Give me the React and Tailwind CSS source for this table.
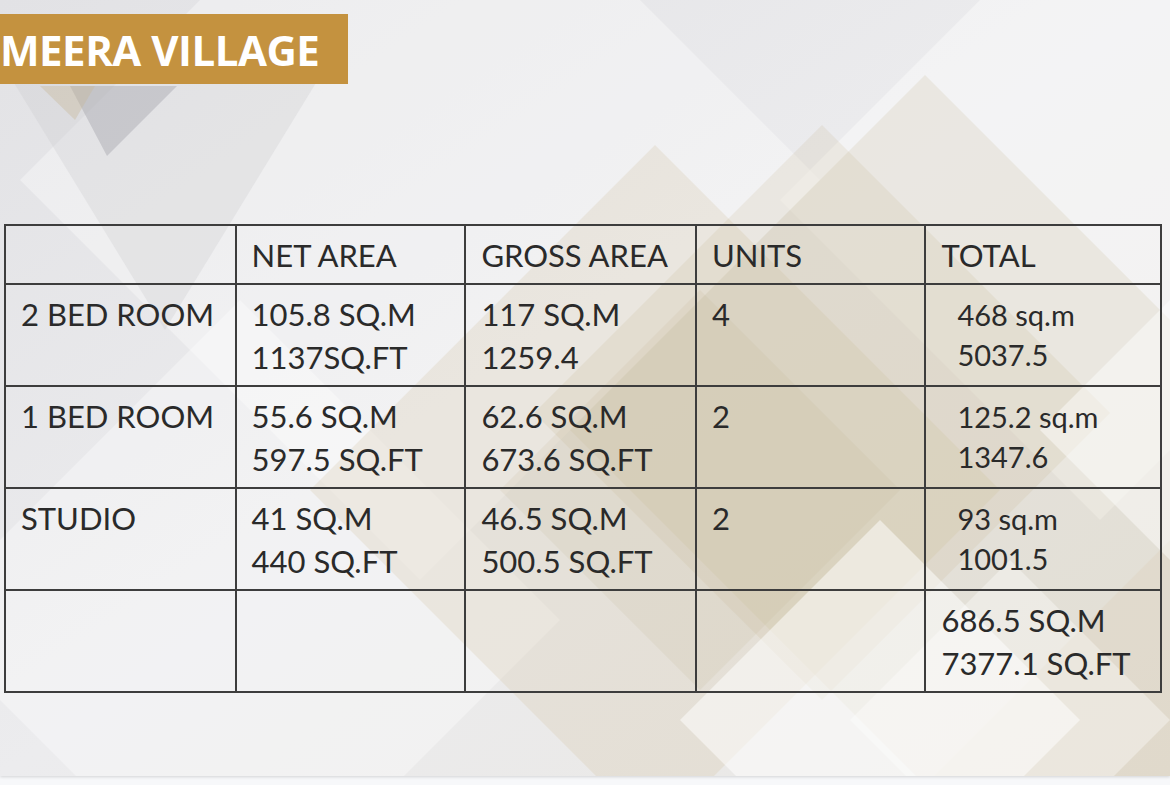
import React from "react";

const rows = [
    { type: "2 BED ROOM", net: ["105.8 SQ.M", "1137SQ.FT"], gross: ["117 SQ.M", "1259.4"], units: "4", total: ["468 sq.m", "5037.5"], indent: true },
    { type: "1 BED ROOM", net: ["55.6 SQ.M", "597.5 SQ.FT"], gross: ["62.6 SQ.M", "673.6 SQ.FT"], units: "2", total: ["125.2 sq.m", "1347.6"], indent: true },
    { type: "STUDIO", net: ["41 SQ.M", "440 SQ.FT"], gross: ["46.5 SQ.M", "500.5 SQ.FT"], units: "2", total: ["93 sq.m", "1001.5"], indent: true },
    { type: "", net: [], gross: [], units: "", total: ["686.5 SQ.M", "7377.1 SQ.FT"], indent: false },
];

function Backdrop() {
    return (
        <svg className="absolute inset-0" width="1170" height="776" viewBox="0 0 1170 776">
            <defs>
                <linearGradient id="base" x1="0" y1="0" x2="1" y2="1">
                    <stop offset="0" stopColor="#e2e2e5" />
                    <stop offset="0.5" stopColor="#ececee" />
                    <stop offset="1" stopColor="#e9e7e3" />
                </linearGradient>
            </defs>
            <rect width="1170" height="776" fill="url(#base)" />
            {/* soft white diamonds */}
            <polygon points="420,-220 820,180 420,580 20,180" fill="#ffffff" opacity="0.35" />
            <polygon points="1100,-120 1420,200 1100,520 780,200" fill="#ffffff" opacity="0.4" />
            <polygon points="240,300 560,620 240,940 -80,620" fill="#ffffff" opacity="0.35" />
            {/* gray bits top-left */}
            <polygon points="0,60 330,60 165,330" fill="#c9c9cd" opacity="0.3" />
            <polygon points="70,86 177,86 107,156" fill="#a7a7ac" opacity="0.45" />
            <polygon points="40,86 95,86 75,120" fill="#c8b89a" opacity="0.4" />
            {/* beige diamonds */}
            <polygon points="655,145 1000,490 655,835 310,490" fill="#cfbf9f" opacity="0.24" />
            <polygon points="925,75 1280,430 925,785 570,430" fill="#cfbf9f" opacity="0.22" />
            <polygon points="822,125 1110,413 822,700 534,413" fill="#c9b692" opacity="0.18" />
            <polygon points="700,290 900,490 700,690 500,490" fill="#bfae8e" opacity="0.14" />
            <polygon points="1170,540 1410,780 1170,1020 930,780" fill="#ccb994" opacity="0.3" />
            {/* white highlights lower right */}
            <polygon points="880,520 1080,720 880,920 680,720" fill="#ffffff" opacity="0.5" />
            <polygon points="1010,560 1170,720 1010,880 850,720" fill="#ffffff" opacity="0.35" />
            <polygon points="1170,300 1300,430 1170,560 1040,430" fill="#ffffff" opacity="0.45" />
        </svg>
    );
}

function Lines({ items }) {
    return items.map((t, i) => <div key={i}>{t}</div>);
}

export default function App() {
    const cell = "border-2 border-[#3d3d3d] align-top px-[15px]";

    return (
        <div className="h-[785px] w-[1170px] overflow-hidden bg-[#f7f8fa]">
            <div className="relative h-[776px] overflow-hidden shadow-[0_1px_3px_rgba(0,0,0,0.15)]">
                <Backdrop />
                <div className="relative flex flex-col">
                    <div className="mt-[14px] flex h-[70px] w-[348px] items-center overflow-hidden bg-[#c4923f]">
                        <span className="whitespace-nowrap text-[42px] font-bold tracking-[-0.5px] text-white" style={{ fontFamily: '"Open Sans", sans-serif' }}>MEERA VILLAGE</span>
                    </div>

                    <table className="ml-[4px] mt-[140px] w-[1158px] border-collapse text-[31px] leading-[43px] text-[#2a2a2a]" style={{ fontFamily: "Lato, sans-serif" }}>
                        <colgroup>
                            <col className="w-[231px]" />
                            <col className="w-[230px]" />
                            <col className="w-[231px]" />
                            <col className="w-[230px]" />
                            <col className="w-[236px]" />
                        </colgroup>
                        <thead>
                            <tr className="h-[59px]">
                                <th className={`${cell} pt-[8px] text-left font-normal`}></th>
                                <th className={`${cell} pt-[8px] text-left font-normal`}>NET AREA</th>
                                <th className={`${cell} pt-[8px] text-left font-normal`}>GROSS AREA</th>
                                <th className={`${cell} pt-[8px] text-left font-normal`}>UNITS</th>
                                <th className={`${cell} pt-[8px] text-left font-normal`}>TOTAL</th>
                            </tr>
                        </thead>
                        <tbody>
                            {rows.map((r, i) => (
                                <tr key={i} className="h-[102px]">
                                    <td className={`${cell} pt-[8px]`}>{r.type}</td>
                                    <td className={`${cell} pt-[8px]`}><Lines items={r.net} /></td>
                                    <td className={`${cell} pt-[8px]`}><Lines items={r.gross} /></td>
                                    <td className={`${cell} pt-[8px]`}>{r.units}</td>
                                    <td className={`${cell} ${r.indent ? "pl-[31px] pt-[10px] text-[29px] leading-[40px]" : "pt-[8px]"}`}><Lines items={r.total} /></td>
                                </tr>
                            ))}
                        </tbody>
                    </table>
                </div>
            </div>
        </div>
    );
}
